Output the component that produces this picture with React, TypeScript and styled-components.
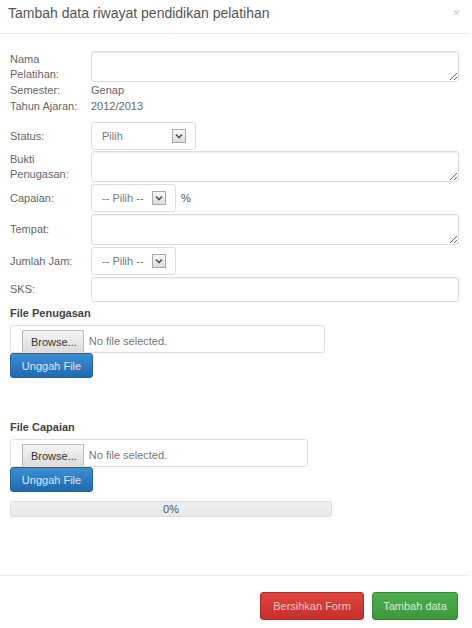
import React from 'react';
import styled, { createGlobalStyle } from 'styled-components';

const GlobalStyle = createGlobalStyle`
  html, body {
    margin: 0;
    padding: 0;
    background: #fff;
  }
  body {
    font-family: "Liberation Sans", Arial, sans-serif;
    color: #555;
  }
`;

const Chevron = () => (
  <svg width="8" height="6" viewBox="0 0 8 6">
    <path d="M1 1.5 L4 4.5 L7 1.5" fill="none" stroke="#555" strokeWidth="1.6" />
  </svg>
);

const Select = ({ label, width }: { label: string; width: number }) => (
  <SelectBox style={{ width }}>
    <span>{label}</span>
    <ArrowBox>
      <Chevron />
    </ArrowBox>
  </SelectBox>
);

const FileField = ({ width }: { width: number }) => (
  <FileBox $width={width}>
    <BrowseButton>Browse...</BrowseButton>
    <NoFile>No file selected.</NoFile>
  </FileBox>
);

export default function App() {
  return (
    <>
      <GlobalStyle />
      <Modal>
        <Header>
          <Title>Tambah data riwayat pendidikan pelatihan</Title>
          <Close>×</Close>
        </Header>
        <Body>
          <FormGrid>
            <Label>
              Nama
              <br />
              Pelatihan:
            </Label>
            <TextArea />

            <Label $top={-1}>Semester:</Label>
            <Value $top={-1}>Genap</Value>
            <Label $top={-1}>Tahun Ajaran:</Label>
            <Value $top={-1}>2012/2013</Value>

            <Label $top={6}>Status:</Label>
            <Control $top={6}>
              <Select label="Pilih" width={105} />
            </Control>

            <Label $top={-1}>
              Bukti
              <br />
              Penugasan:
            </Label>
            <TextArea style={{ marginTop: -1 }} />

            <Label>Capaian:</Label>
            <Control>
              <Select label="-- Pilih --" width={85} />
              <Percent>%</Percent>
            </Control>

            <Label>Tempat:</Label>
            <TextArea />

            <Label>Jumlah Jam:</Label>
            <Control>
              <Select label="-- Pilih --" width={85} />
            </Control>

            <Label>SKS:</Label>
            <TextInput />
          </FormGrid>

          <Section>
            <SectionTitle>File Penugasan</SectionTitle>
            <FileField width={315} />
            <UploadButton>Unggah File</UploadButton>
          </Section>

          <Section $top={42}>
            <SectionTitle>File Capaian</SectionTitle>
            <FileField width={298} />
            <UploadButton>Unggah File</UploadButton>
            <Progress>0%</Progress>
          </Section>
        </Body>
        <Footer>
          <Button $tone="danger" $width={104}>
            Bersihkan Form
          </Button>
          <Button $tone="success" $width={86}>
            Tambah data
          </Button>
        </Footer>
      </Modal>
    </>
  );
}

const Modal = styled.div`
  width: 469px;
  background: #fff;
`;

const Header = styled.div`
  display: flex;
  justify-content: space-between;
  align-items: flex-start;
  height: 34px;
  box-sizing: border-box;
  padding: 4px 9px 0 8px;
  border-bottom: 1px solid #e8e8e8;
`;

const Title = styled.h3`
  margin: 0;
  font-size: 14px;
  font-weight: normal;
  color: #555;
  line-height: 18px;
`;

const Close = styled.span`
  font-size: 12px;
  color: #ccc;
  line-height: 18px;
`;

const Body = styled.div`
  padding: 17px 10px 0 10px;
  height: 541px;
  box-sizing: border-box;
`;

const FormGrid = styled.div`
  display: grid;
  grid-template-columns: 81px 368px;
  row-gap: 2px;
  align-items: center;
`;

const Label = styled.div<{ $top?: number }>`
  font-size: 11px;
  line-height: 15px;
  color: #666;
  margin-top: ${(p) => p.$top ?? 0}px;
`;

const Value = styled.div<{ $top?: number }>`
  font-size: 11px;
  line-height: 15px;
  color: #666;
  margin-top: ${(p) => p.$top ?? 0}px;
`;

const Control = styled.div<{ $top?: number }>`
  display: flex;
  align-items: center;
  gap: 5px;
  margin-top: ${(p) => p.$top ?? 0}px;
`;

const TextArea = styled.textarea`
  height: 31px;
  box-sizing: border-box;
  border: 1px solid #ddd;
  border-radius: 3px;
  box-shadow: inset 0 1px 1px rgba(0, 0, 0, 0.06);
  resize: both;
  font-family: inherit;
  margin: 0;
`;

const TextInput = styled.input`
  height: 25px;
  box-sizing: border-box;
  border: 1px solid #ddd;
  border-radius: 3px;
  box-shadow: inset 0 1px 1px rgba(0, 0, 0, 0.06);
  margin: 0;
`;

const SelectBox = styled.div`
  height: 28px;
  box-sizing: border-box;
  display: flex;
  align-items: center;
  justify-content: space-between;
  padding: 0 9px 0 10px;
  border: 1px solid #ddd;
  border-radius: 3px;
  font-size: 11px;
  color: #777;
`;

const ArrowBox = styled.span`
  display: flex;
  align-items: center;
  justify-content: center;
  width: 14px;
  height: 14px;
  box-sizing: border-box;
  border: 1px solid #aaa;
  background: linear-gradient(#f8f8f8, #ddd);
`;

const Percent = styled.span`
  font-size: 11px;
  color: #555;
`;

const Section = styled.div<{ $top?: number }>`
  margin-top: ${(p) => p.$top ?? 4}px;
`;

const SectionTitle = styled.div`
  font-size: 11px;
  font-weight: bold;
  color: #444;
  line-height: 14px;
  margin-bottom: 5px;
`;

const FileBox = styled.div<{ $width: number }>`
  width: ${(p) => p.$width}px;
  height: 28px;
  box-sizing: border-box;
  display: flex;
  align-items: flex-end;
  gap: 5px;
  padding-left: 11px;
  border: 1px solid #e0e0e0;
  border-radius: 3px;
`;

const BrowseButton = styled.span`
  height: 22px;
  box-sizing: border-box;
  padding: 0 6px 0 8px;
  display: flex;
  align-items: center;
  border: 1px solid #bbb;
  border-bottom: none;
  background: linear-gradient(#f4f4f4, #dcdcdc);
  font-size: 11px;
  color: #333;
`;

const NoFile = styled.span`
  font-size: 11px;
  color: #777;
  line-height: 22px;
`;

const UploadButton = styled.div`
  width: 83px;
  height: 25px;
  box-sizing: border-box;
  display: flex;
  align-items: center;
  justify-content: center;
  border-radius: 3px;
  background: linear-gradient(#3a8fd3, #2269ad);
  border: 1px solid #2262a0;
  color: #dbe9f7;
  font-size: 11px;
`;

const Progress = styled.div`
  width: 322px;
  height: 16px;
  margin-top: 9px;
  box-sizing: border-box;
  border: 1px solid #ddd;
  border-radius: 2px;
  background: linear-gradient(#f0f0f0, #e8e8e8);
  font-size: 11px;
  color: #555;
  text-align: center;
  line-height: 14px;
`;

const Footer = styled.div`
  border-top: 1px solid #ececec;
  display: flex;
  justify-content: flex-end;
  gap: 8px;
  padding: 16px 11px 0 0;
`;

const Button = styled.div<{ $tone: 'danger' | 'success'; $width: number }>`
  width: ${(p) => p.$width}px;
  height: 28px;
  box-sizing: border-box;
  display: flex;
  align-items: center;
  justify-content: center;
  border-radius: 3px;
  font-size: 11px;
  color: ${(p) => (p.$tone === 'danger' ? '#f3c4c2' : '#d6efd6')};
  background: ${(p) =>
    p.$tone === 'danger'
      ? 'linear-gradient(#e0433f, #c4302c)'
      : 'linear-gradient(#4cae4c, #3d973d)'};
  border: 1px solid ${(p) => (p.$tone === 'danger' ? '#b52b27' : '#398439')};
`;
